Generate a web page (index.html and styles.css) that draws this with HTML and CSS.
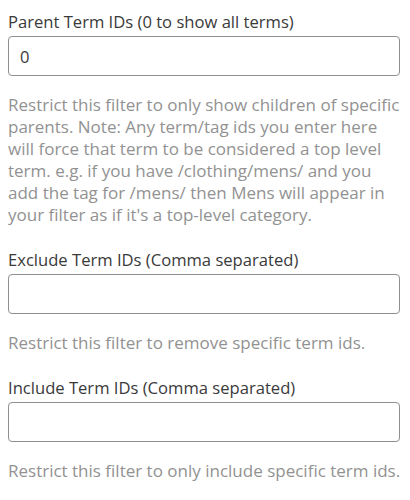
FILE: index.html
```html
<!DOCTYPE html>
<html lang="en">
<head>
<meta charset="utf-8">
<title>Term filter settings</title>
<link rel="stylesheet" href="styles.css">
</head>
<body>
<div class="form">
  <div class="field">
    <label class="field-label" for="parent">Parent Term IDs (0 to show all terms)</label>
    <input class="field-input" id="parent" type="text" value="0">
    <p class="field-desc">Restrict this filter to only show children of specific parents. Note: Any term/tag ids you enter here will force that term to be considered a top level term. e.g. if you have /clothing/mens/ and you add the tag for /mens/ then Mens will appear in your filter as if it's a top-level category.</p>
  </div>
  <div class="field">
    <label class="field-label" for="exclude">Exclude Term IDs (Comma separated)</label>
    <input class="field-input" id="exclude" type="text" value="">
    <p class="field-desc">Restrict this filter to remove specific term ids.</p>
  </div>
  <div class="field">
    <label class="field-label" for="include">Include Term IDs (Comma separated)</label>
    <input class="field-input" id="include" type="text" value="">
    <p class="field-desc">Restrict this filter to only include specific term ids.</p>
  </div>
</div>
</body>
</html>
```

FILE: styles.css
```css
html, body {
  margin: 0;
  padding: 0;
  background: #ffffff;
}

body {
  font-family: "Open Sans", "Noto Sans", sans-serif;
  font-size: 16px;
  color: #3a3a3a;
}

.form {
  display: flex;
  flex-direction: column;
  padding: 12px 10px 0 8px;
}

.field {
  display: flex;
  flex-direction: column;
}

.field-label {
  display: block;
  line-height: 20px;
  font-size: 16.6px;
  color: #3a3a3a;
  margin-bottom: 4px;
}

.field-input {
  box-sizing: border-box;
  width: 100%;
  height: 40px;
  margin: 0;
  padding: 0 11px;
  border: 1px solid #8f8f8f;
  border-radius: 4px;
  background: #fff;
  font-family: inherit;
  font-size: 16.6px;
  color: #3a3a3a;
  outline: none;
}

.field-desc {
  margin: 18px -6px 24px 0;
  font-size: 17px;
  line-height: 22px;
  color: #929292;
}
```
